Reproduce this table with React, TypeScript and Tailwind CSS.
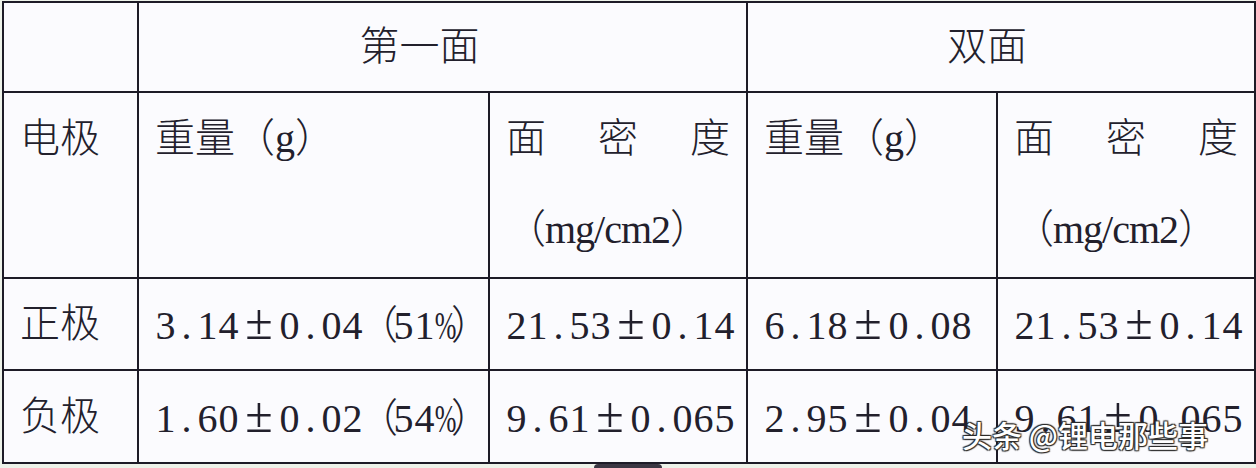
const cell = "border-2 border-[#1d1b27] px-4 text-left font-light";

// SimSun-like fixed cells: half-width chars 21px, ± 40px, brackets 30px
function Ch({ ch }: { ch: string }) {
  if (ch === "±") return <span className="w-[40px] shrink-0 text-center text-[50px]">{ch}</span>;
  if (ch === "（" || ch === "）") return <span className="w-[30px] shrink-0 flex justify-center">{ch}</span>;
  if (ch === "%")
    return (
      <span className="w-[21px] shrink-0 flex justify-center">
        <span className="inline-block scale-x-[0.65]">{ch}</span>
      </span>
    );
  return <span className="w-[21px] shrink-0 text-center">{ch}</span>;
}

function Num({ text }: { text: string }) {
  return (
    <span className="inline-flex items-baseline whitespace-nowrap">
      {[...text].map((ch, i) => (
        <Ch key={i} ch={ch} />
      ))}
    </span>
  );
}

function Density() {
  return (
    <div className="leading-[91px]">
      <div className="flex justify-between">
        <span>面</span>
        <span>密</span>
        <span>度</span>
      </div>
      <div className="tracking-[-1px]">（mg/cm2）</div>
    </div>
  );
}

export default function App() {
  const rows = [
    { name: "正极", a: "3.14±0.04（51%）", b: "21.53±0.14", c: "6.18±0.08", d: "21.53±0.14", h: "h-[92px]" },
    { name: "负极", a: "1.60±0.02（54%）", b: "9.61±0.065", c: "2.95±0.04", d: "9.61±0.065", h: "h-[93px]" },
  ];

  return (
    <div className="relative w-[1256px] h-[468px] bg-[#eef3ea] overflow-hidden">
      <div className="pt-[1px] pl-[2px]">
        <table
          className="table-fixed border-collapse bg-[#fbfbfe] text-[#22202c] text-[40px] leading-[44px] w-[1252px]"
          style={{ fontFamily: '"Liberation Serif", "Noto Sans CJK SC", serif' }}
        >
          <colgroup>
            <col className="w-[135px]" />
            <col className="w-[351px]" />
            <col className="w-[258px]" />
            <col className="w-[250px]" />
            <col className="w-[258px]" />
          </colgroup>
          <thead>
            <tr className="h-[90px]">
              <th className={`${cell} align-middle`}></th>
              <th colSpan={2} className={`${cell} align-middle !text-center pr-[62px]`}>
                第一面
              </th>
              <th colSpan={2} className={`${cell} align-middle !text-center pr-[44px]`}>
                双面
              </th>
            </tr>
            <tr className="h-[186px]">
              <th className={`${cell} align-top leading-[91px]`}>电极</th>
              <th className={`${cell} align-top leading-[91px]`}>重量（g）</th>
              <th className={`${cell} align-top`}>
                <Density />
              </th>
              <th className={`${cell} align-top leading-[91px]`}>重量（g）</th>
              <th className={`${cell} align-top`}>
                <Density />
              </th>
            </tr>
          </thead>
          <tbody>
            {rows.map((r) => (
              <tr key={r.name} className={r.h}>
                <td className={`${cell} align-middle`}>{r.name}</td>
                <td className={`${cell} align-middle`}>
                  <Num text={r.a} />
                </td>
                <td className={`${cell} align-middle`}>
                  <Num text={r.b} />
                </td>
                <td className={`${cell} align-middle`}>
                  <Num text={r.c} />
                </td>
                <td className={`${cell} align-middle`}>
                  <Num text={r.d} />
                </td>
              </tr>
            ))}
          </tbody>
        </table>
        <div className="ml-[592px] h-[4px] w-[68px] rounded-t bg-[#3b3743]" />
      </div>

      {/* watermark */}
      <div
        className="absolute left-[962px] top-[416px] text-[30px] leading-[36px] font-medium text-white [text-shadow:1px_1px_1px_#2a2a2a,-1px_-1px_1px_#2a2a2a,1px_-1px_1px_#2a2a2a,-1px_1px_1px_#2a2a2a]"
        style={{ fontFamily: '"Noto Sans CJK SC", "Noto Sans", sans-serif' }}
      >
        头条 @锂电那些事
      </div>
    </div>
  );
}
